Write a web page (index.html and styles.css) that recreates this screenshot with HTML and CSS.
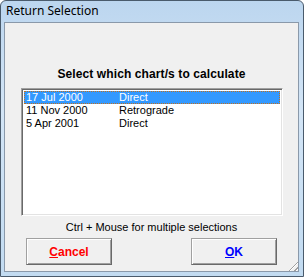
FILE: index.html
```html
<!DOCTYPE html>
<html>
  <head>
    <meta charset="utf-8" />
    <title>Return Selection</title>
    <link rel="stylesheet" href="styles.css">
  </head>
  <body>
    <div class="window">
      <div class="titlebar">Return Selection</div>
      <div class="client">
        <h3 class="prompt">Select which chart/s to calculate</h3>
        <div class="listbox">
          <div class="row selected">
            <span class="date">17 Jul 2000</span><span>Direct</span>
          </div>
          <div class="row">
            <span class="date">11 Nov 2000</span><span>Retrograde</span>
          </div>
          <div class="row">
            <span class="date">5 Apr 2001</span><span>Direct</span>
          </div>
        </div>
        <div class="hint">Ctrl + Mouse for multiple selections</div>
        <div class="buttons">
          <button class="btn cancel"><u>C</u>ancel</button>
          <button class="btn ok"><u>O</u>K</button>
        </div>
        <div class="grip"></div>
      </div>
    </div>
  </body>
</html>
```

FILE: styles.css
```css
html,
body {
  margin: 0;
  padding: 0;
}
body {
  font-family: "Liberation Sans", Arial, sans-serif;
  font-size: 11px;
}
.window {
  width: 304px;
  height: 277px;
  box-sizing: border-box;
  border: 1px solid #4a5b6c;
  border-radius: 6px 6px 0 0;
  background: linear-gradient(180deg, #bcd6ef 0%, #d3e5f6 40%, #c2dbf1 100%);
  display: flex;
  flex-direction: column;
  padding: 0 4px 4px 3px;
}
.titlebar {
  height: 21px;
  line-height: 20px;
  padding-left: 2px;
  font-family: "Noto Sans", "Open Sans", sans-serif;
  font-size: 12px;
  color: #000;
}
.client {
  flex: 1;
  position: relative;
  background: #f0f0f0;
  border: 1px solid #8a99aa;
  display: flex;
  flex-direction: column;
  align-items: center;
}
.prompt {
  margin: 44px 0 0;
  height: 17px;
  font-size: 12px;
  font-weight: bold;
  letter-spacing: 0.1px;
  text-align: center;
}
.listbox {
  align-self: stretch;
  margin: 4px 15px 0 16px;
  height: 128px;
  box-sizing: border-box;
  background: #fff;
  border-top: 1px solid #a0a0a0;
  border-left: 1px solid #a0a0a0;
  border-right: 1px solid #fff;
  border-bottom: 1px solid #fff;
  box-shadow: inset 1px 1px 0 #696969, inset -1px -1px 0 #e3e3e3;
  padding: 2px;
}
.row {
  height: 13px;
  line-height: 13px;
  padding-left: 2px;
  white-space: nowrap;
  box-sizing: border-box;
}
.row.selected {
  background: #3399ff;
  color: #fff;
  outline: 1px dotted #c07020;
  outline-offset: -1px;
}
.date {
  display: inline-block;
  width: 93px;
}
.hint {
  margin-top: 5px;
  height: 13px;
  line-height: 13px;
}
.buttons {
  align-self: stretch;
  display: flex;
  justify-content: space-between;
  margin: 4px 21px 0 21px;
}
.btn {
  width: 86px;
  height: 27px;
  font-family: "Liberation Sans", Arial, sans-serif;
  font-size: 12px;
  font-weight: bold;
  background: #f0f0f0;
  border: 1px solid #696969;
  border-top-color: #a0a0a0;
  border-left-color: #a0a0a0;
  box-shadow: inset 1px 1px 0 #fff, inset -1px -1px 0 #a0a0a0;
  padding: 0;
}
.cancel {
  color: #ff0000;
}
.ok {
  color: #0000ff;
}
.grip {
  position: absolute;
  right: 0;
  bottom: 0;
  width: 12px;
  height: 12px;
  background: repeating-linear-gradient(135deg, transparent 0 2px, #a0a0a0 2px 3px, #fff 3px 4px);
  clip-path: polygon(100% 0, 100% 100%, 0 100%);
}
```
